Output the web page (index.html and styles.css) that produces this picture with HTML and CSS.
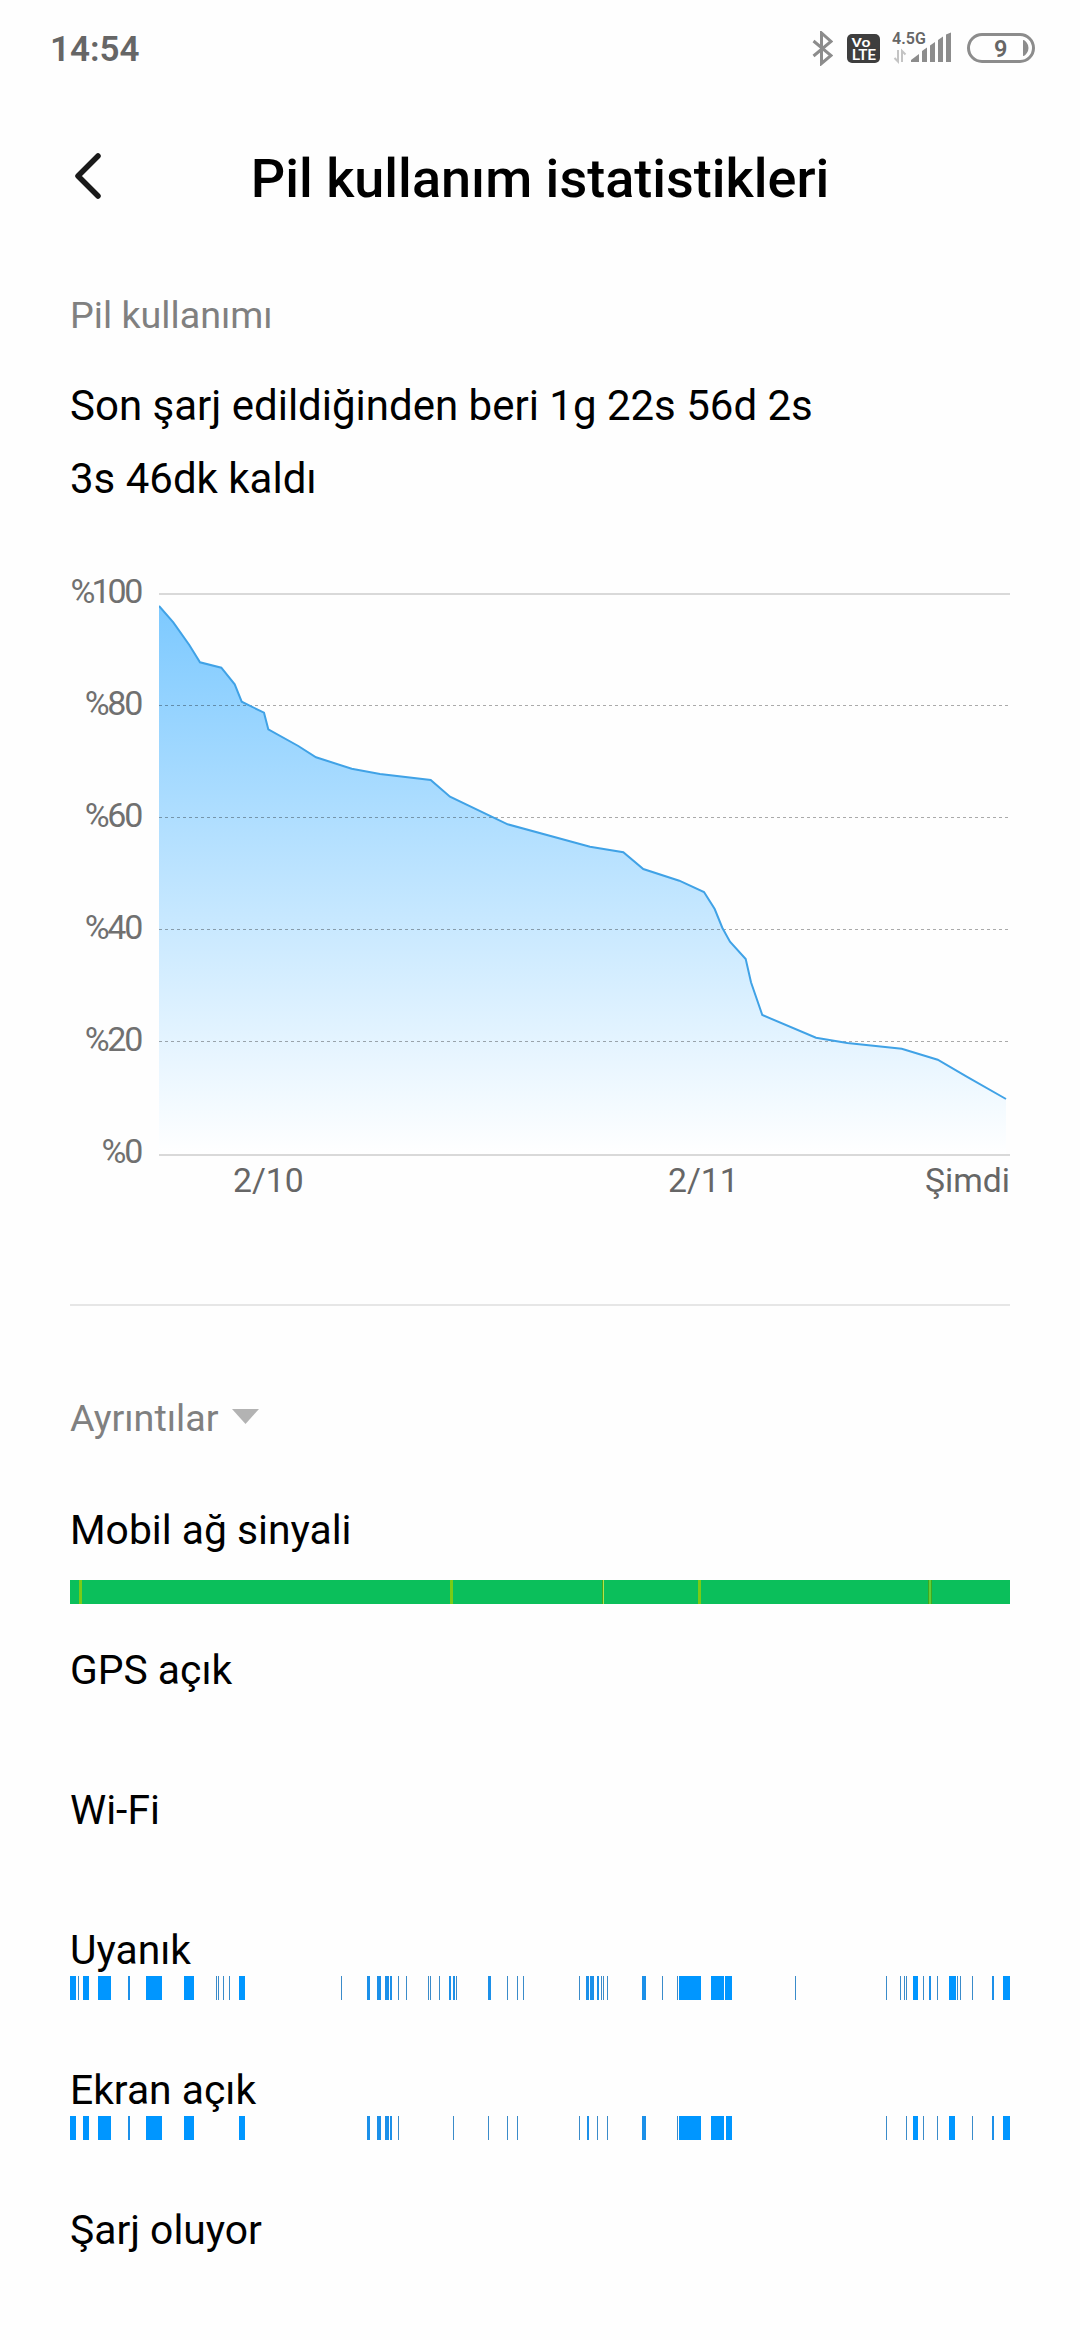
FILE: index.html
```html
<!DOCTYPE html>
<html lang="tr">
<head>
<meta charset="utf-8">
<title>Pil kullanım istatistikleri</title>
<link rel="stylesheet" href="styles.css">
</head>
<body>
<div class="status">
  <span class="clock">14:54</span>
  <div class="status-icons">
    <svg class="bluetooth" width="21" height="35" viewBox="0 0 21 35"><path d="M1.500 10L19 24.500L9.500 32.500V2L19 10.500L1.500 25" fill="none" stroke="#8c8c8c" stroke-width="3"/></svg>
    <svg class="volte" width="33" height="29" viewBox="0 0 33 29"><rect width="33" height="29" rx="5" fill="#3e3e3e"/><text x="4.500" y="12.500" font-size="13" textLength="19" lengthAdjust="spacingAndGlyphs">Vo</text><text x="5" y="26" font-size="14" textLength="24" lengthAdjust="spacingAndGlyphs">LTE</text></svg>
    <svg class="signal" width="60" height="40" viewBox="0 -3 60 40">
      <text x="0" y="12.500" font-size="16" textLength="34">4.5G</text>
      <g fill="#8c8c8c"><path d="M19 31v-2l8-6v8zM30 31v-11l5-3.500v14.500zM38 31v-16.500l5-3.500v20zM46 31v-22l5-3.500v25.500zM54 31v-27.500l5-2v29.500z"/></g>
      <path d="M6 19v11.500l-3.500-3.500M10 31v-11l3.500 3.500" fill="none" stroke="#c4c4c4" stroke-width="2"/>
    </svg>
    <svg class="battery" width="68" height="30" viewBox="0 0 68 30"><rect x="1.500" y="1.500" width="65" height="27" rx="13.500" fill="none" stroke="#8c8c8c" stroke-width="3"/><path d="M56 7q2.500 0 5 5q1 3 0 6q-2.500 5-5 5z" fill="#8c8c8c"/><text x="27" y="23.500" font-size="23.500">9</text></svg>
  </div>
</div>
<header class="bar">
  <svg class="back" width="30" height="50" viewBox="0 0 30 50"><path d="M25 5L5 25L25 45" fill="none" stroke="#1a1a1a" stroke-width="5.500" stroke-linecap="round" stroke-linejoin="round"/></svg>
  <h1>Pil kullanım istatistikleri</h1>
</header>
<main>
  <h2 class="section">Pil kullanımı</h2>
  <p class="summary">Son şarj edildiğinden beri 1g 22s 56d 2s<br>3s 46dk kaldı</p>
  <div class="chart">
    <div class="y-axis"><span>%<b>1</b>00</span><span>%80</span><span>%60</span><span>%40</span><span>%20</span><span>%0</span></div>
    <div class="plot">
      <svg width="851" height="563" viewBox="159 593 851 563">
        <defs><linearGradient id="area" gradientUnits="userSpaceOnUse" x1="0" y1="594" x2="0" y2="1155"><stop offset="0" stop-color="#7ac8ff"/><stop offset="1" stop-color="#fff"/></linearGradient></defs>
        <path fill="url(#area)" d="M159 606L173.300 622.300L189.300 645L200 662.300L221.300 667.700L234.700 684.300L241.700 701.700L264 712.700L268.300 729.300L298.300 746L316 757.300L351.700 768.700L380 774L430.700 780L450 796.700L507.700 824.300L590 846.700L623.300 852.300L643.300 869L679.300 880.700L704 892L714.700 909L722.300 927.700L730 941.700L745.700 959L751 982.300L762.300 1015L816 1037.700L847.300 1043L901.700 1048.700L937.700 1059.700L966.700 1076.700L1006 1099V1155H159z"/>
        <g stroke="#000" stroke-opacity=".33" stroke-dasharray="3 3"><path d="M159 705.500h851M159 817.500h851M159 929.500h851M159 1041.500h851"/></g>
        <path d="M159 594h851M159 1155h851" stroke="#d9d9d9" stroke-width="2"/>
        <path fill="none" stroke="#40a2e6" stroke-width="2" d="M159 606L173.300 622.300L189.300 645L200 662.300L221.300 667.700L234.700 684.300L241.700 701.700L264 712.700L268.300 729.300L298.300 746L316 757.300L351.700 768.700L380 774L430.700 780L450 796.700L507.700 824.300L590 846.700L623.300 852.300L643.300 869L679.300 880.700L704 892L714.700 909L722.300 927.700L730 941.700L745.700 959L751 982.300L762.300 1015L816 1037.700L847.300 1043L901.700 1048.700L937.700 1059.700L966.700 1076.700L1006 1099"/>
      </svg>
      <div class="x-axis"><span>2/10</span><span>2/11</span><span>Şimdi</span></div>
    </div>
  </div>
  <h2 class="section details">Ayrıntılar <svg width="27" height="15" viewBox="0 0 27 15"><path d="M0 0h27L13.500 15z" fill="#b3b3b3"/></svg></h2>
  <section class="row signal-row"><h3>Mobil ağ sinyali</h3>
    <svg width="940" height="24" viewBox="70 0 940 24"><path fill="#0bbf5b" d="M70 0h940v24h-940z"/><path fill="#7acb16" d="M79 0h3v24h-3zM450 0h3v24h-3zM698 0h3v24h-3z"/><path fill="#3fa81f" d="M602 0h1v24h-1zM928 0h4v24h-4z"/><path fill="#b5e34a" d="M603 0h1v24h-1z"/><path fill="#62d035" d="M929 0h2v24h-2z"/></svg></section>
  <section class="row"><h3>GPS açık</h3></section>
  <section class="row"><h3>Wi-Fi</h3></section>
  <section class="row"><h3>Uyanık</h3><svg class="strip" id="awake" width="940" height="24" viewBox="70 0 940 24"></svg></section>
  <section class="row"><h3>Ekran açık</h3><svg class="strip" id="screen" width="940" height="24" viewBox="70 0 940 24"></svg></section>
  <section class="row"><h3>Şarj oluyor</h3></section>
</main>
<script src="strips.js"></script>
</body>
</html>
```
FILE: strips.js
```js
// Active periods as [start, width] in timeline units.
const periods = {
  awake: [[70,6],[78,1],[83,6],[98,13],[128,2],[146,16],[184,10],[216,1],[218,1],[223,1],[229,1],[239,6],[341,1],[367,3],[377,4],[385,4],[390,2],[398,1],[406,1],[428,1],[430,1],[439,1],[449,2],[453,2],[456,1],[488,3],[507,1],[517,1],[523,1],[579,1],[586,3],[590,4],[597,2],[601,1],[603,1],[607,1],[642,4],[662,1],[677,1],[679,22],[711,13],[725,7],[795,1],[886,1],[900,1],[904,1],[906,1],[913,5],[923,1],[929,2],[937,1],[949,7],[957,1],[960,1],[972,1],[992,2],[1003,7]],
  screen: [[70,6],[83,6],[98,13],[128,2],[146,16],[184,10],[239,6],[367,3],[377,4],[385,4],[390,2],[398,1],[453,1],[488,1],[507,1],[517,1],[579,1],[587,2],[597,1],[607,1],[642,4],[677,1],[679,22],[711,13],[726,6],[886,1],[906,1],[913,5],[923,1],[937,1],[949,6],[972,1],[992,2],[1003,7]]
};
for (const [id, list] of Object.entries(periods)) {
  document.getElementById(id).innerHTML = list.map(([x, w]) =>
    `<rect x="${x}" width="${w}" height="24" class="${w === 1 ? 'thin' : w < 5 ? 'medium' : 'wide'}"/>`).join('');
}
```
FILE: styles.css
```css
* { box-sizing: border-box; margin: 0; padding: 0; }
body { width: 1080px; height: 2340px; overflow: hidden; background: #fefefe; color: #000; font-family: Roboto, sans-serif; }
svg { display: block; flex: none; }
h1, h2, h3 { font-weight: 400; }
.status { height: 98px; padding: 0 45px 2px 50px; display: flex; align-items: center; justify-content: space-between; }
.clock { font-size: 35px; font-weight: 600; color: #666; padding-top: 2px; }
.status-icons { display: flex; align-items: center; }
.status-icons text { font-weight: 600; fill: #666; }
.status-icons .volte text { fill: #fff; }
.volte { margin-left: 14px; }
.signal { margin-left: 12px; }
.battery { margin-left: 15px; }
.bar { height: 162px; display: grid; grid-template-columns: 110px 1fr 110px; align-items: center; padding: 0 0 4px; }
.back { margin-left: 73px; margin-bottom: 2px; }
.bar h1 { font-size: 54px; font-weight: 500; text-align: center; line-height: 70px; padding-top: 4px; }
main { padding: 0 70px; }
.section { font-size: 37.700px; line-height: 60px; color: #808080; padding-top: 25px; }
.summary { font-size: 42px; line-height: 73px; padding-top: 24px; }
.chart { display: flex; height: 789px; padding-top: 20px; }
.y-axis { width: 70px; flex: none; display: flex; flex-direction: column; align-items: flex-end; font-size: 34px; font-weight: 400; letter-spacing: -2.300px; color: #707070; }
.y-axis span { height: 112px; line-height: 112px; margin-right: -1px; }
.y-axis b { font-weight: inherit; margin: 0 -1px 0 -1.500px; }
.plot { margin-left: 19px; padding-top: 58px; }
.x-axis { display: grid; grid-template-columns: 328px 1fr auto; font-size: 33.700px; line-height: 50px; color: #666; }
.x-axis span:nth-child(1) { padding-left: 74px; }
.x-axis span:nth-child(2) { padding-left: 181px; }
.details { border-top: 2px solid #e6e6e6; display: flex; align-items: center; gap: 13px; height: 196px; padding-top: 30px; }
.details svg { margin-bottom: 3px; }
.row { height: 140px; }
.row h3 { font-size: 40.800px; line-height: 60px; height: 56px; }
.signal-row h3 { height: 80px; }
.thin { fill: #3a8bca; }
.medium { fill: #1c90e9; }
.wide { fill: #0096ff; }
```
